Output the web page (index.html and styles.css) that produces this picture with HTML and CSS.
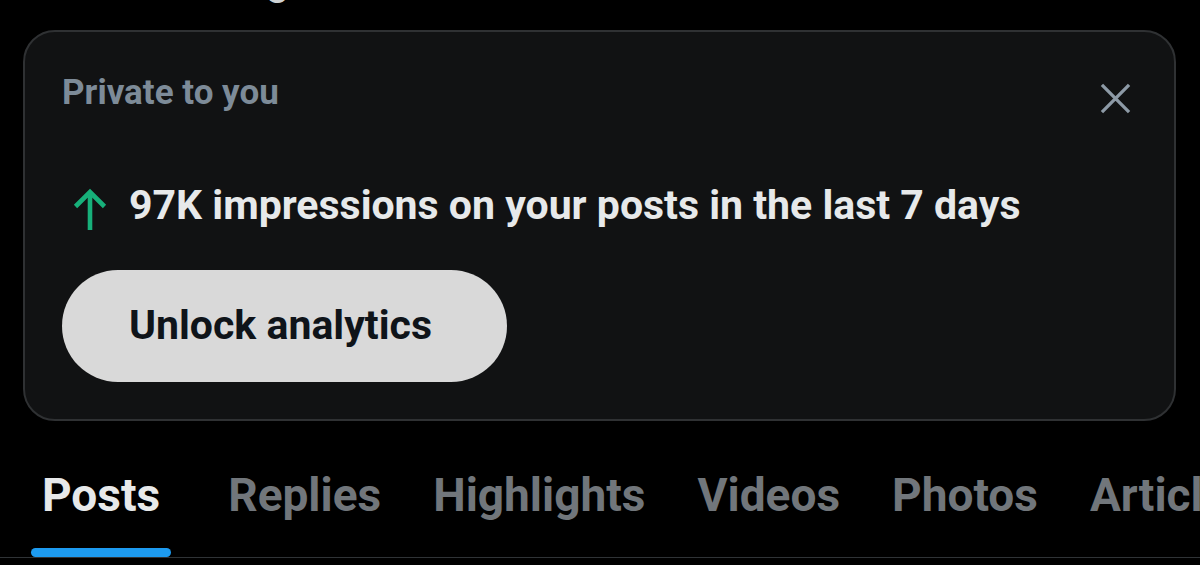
FILE: index.html
```html
<!DOCTYPE html>
<html lang="en">
<head>
    <meta charset="UTF-8">
    <meta name="viewport" content="width=device-width, initial-scale=1.0">
    <title>Profile</title>
    <link rel="stylesheet" href="styles.css">
</head>
<body>
    <div class="page">
        <div class="cut-line"><span>Following</span></div>

        <div class="card">
            <div class="card-head">
                <span class="card-label">Private to you</span>
                <button class="close-btn" aria-label="Close">
                    <svg viewBox="0 0 32 32" width="31" height="31">
                        <path d="M2 2 L30 30 M30 2 L2 30" stroke="currentColor" stroke-width="3.4" fill="none"/>
                    </svg>
                </button>
            </div>
            <div class="stat">
                <svg class="stat-arrow" viewBox="0 0 34 42" width="34" height="42">
                    <path d="M17 42 V4 M2.5 18.5 L17 4 L31.5 18.5" stroke="currentColor" stroke-width="4.6" fill="none"/>
                </svg>
                <span>97K impressions on your posts in the last 7 days</span>
            </div>
            <button class="unlock-btn">Unlock analytics</button>
        </div>

        <nav class="tabs">
            <a class="tab active">Posts</a>
            <a class="tab">Replies</a>
            <a class="tab">Highlights</a>
            <a class="tab">Videos</a>
            <a class="tab">Photos</a>
            <a class="tab">Articles</a>
        </nav>
    </div>
</body>
</html>
```

FILE: styles.css
```css
body {
    margin: 0;
    background: #000;
    font-family: 'Roboto', 'Liberation Sans', sans-serif;
    color: #e7e9ea;
    overflow: hidden;
}

.page {
    width: 1200px;
    height: 565px;
    overflow: hidden;
}

/* bottom edge of the line above, scrolled mostly out of view */
.cut-line {
    height: 4px;
    overflow: hidden;
    display: flex;
    align-items: flex-end;
    padding-left: 113px;
    font-size: 41px;
    line-height: 1.1;
    font-weight: 500;
    color: #cfd2d4;
}

.card {
    margin: 26px 24px 0 23px;
    height: 391px;
    box-sizing: border-box;
    border: 2px solid #2f3133;
    border-radius: 32px;
    background: #111213;
    padding: 43px 0 0 37px;
}

.card-head {
    display: flex;
    justify-content: space-between;
    align-items: flex-start;
    height: 35px;
}

.card-label {
    font-size: 35px;
    line-height: 1;
    font-weight: 700;
    color: #7d8b98;
}

.close-btn {
    background: none;
    border: none;
    padding: 0;
    margin: 8px 43px 0 0;
    color: #8d9aa6;
    display: flex;
}

.stat {
    display: flex;
    align-items: center;
    gap: 22px;
    height: 41px;
    margin: 75px 0 0 11px;
    font-size: 41px;
    line-height: 1;
    font-weight: 700;
    color: #e7e9ea;
}

.stat-arrow {
    color: #17b07a;
    margin-top: 6px;
}

.unlock-btn {
    display: block;
    margin-top: 44px;
    width: 445px;
    height: 112px;
    border: none;
    border-radius: 56px;
    background: #d9d9d9;
    color: #0f1419;
    font-family: inherit;
    font-size: 41px;
    line-height: 1;
    font-weight: 700;
    text-align: left;
    padding: 0 0 2px 67px;
}

.tabs {
    display: flex;
    margin-top: 51px;
    padding-left: 31px;
    height: 86px;
    border-bottom: 1px solid #2f3336;
    box-sizing: border-box;
}

.tab {
    position: relative;
    flex-shrink: 0;
    padding: 0 26px;
    font-size: 46px;
    line-height: 1;
    font-weight: 700;
    color: #71767b;
}

.tab.active {
    color: #e7e9ea;
    padding: 0 11px;
    margin-right: 31px;
}

.tab.active::after {
    content: "";
    position: absolute;
    left: 0;
    right: 0;
    bottom: 0;
    height: 9px;
    border-radius: 5px;
    background: #1d9bf0;
}
```
